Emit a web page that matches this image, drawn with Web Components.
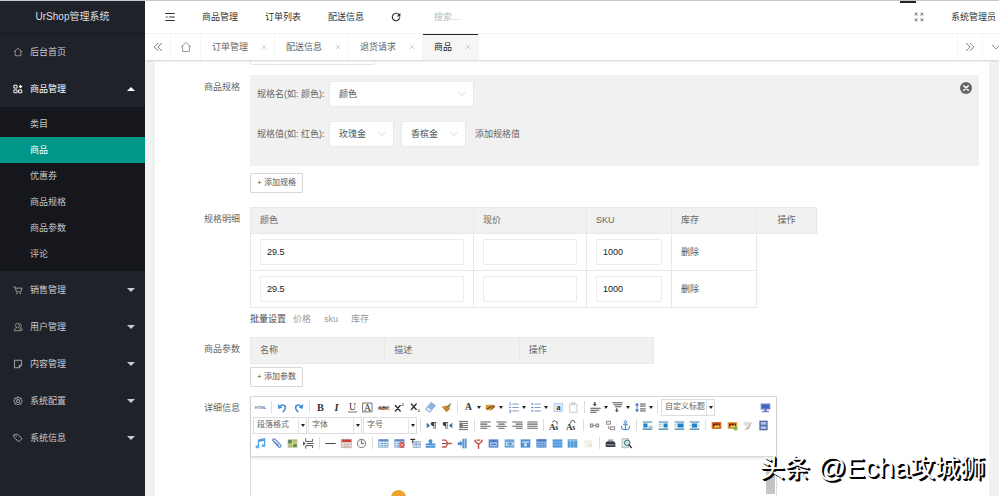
<!DOCTYPE html>
<html lang="zh-CN">
<head>
<meta charset="utf-8">
<title>UrShop管理系统</title>
<style>
html, body { margin: 0; height: 100%; }
body { font: 9px/12px "Liberation Sans", "Noto Sans CJK SC", sans-serif; color: #666; background: #f2f2f2; overflow: hidden; }
</style>
</head>
<body>
<ur-app></ur-app>
<script>
const define = (name, html, setup) => {
  const template = document.createElement('template');
  template.innerHTML = html;
  customElements.define(name, class extends HTMLElement {
    constructor() {
      super();
      this.attachShadow({ mode: 'open' }).append(template.content.cloneNode(true));
    }
    connectedCallback() { if (setup) setup(this, this.shadowRoot); }
  });
};

const line = (d, color = 'currentColor', w = 1.3) => `<path d="${d}" fill="none" stroke="${color}" stroke-width="${w}" stroke-linecap="round" stroke-linejoin="round"/>`;
const fill = (d, color = 'currentColor') => `<path d="${d}" fill="${color}"/>`;
const grid = (head, body) => fill('M1 2H15V14H1Z', body) + fill('M1 2H15V5H1Z', head) + line('M1.5 2.5H14.5V13.5H1.5ZM1.5 8H14.5M1.5 11H14.5M6 5V13.5M10.5 5V13.5', '#4c7fc0', .7);
const text = (x, y, size, s, extra = '') => `<text x="${x}" y="${y}" font-size="${size}" font-family="Liberation Serif, serif" fill="#333" ${extra}>${s}</text>`;
const photo = c => fill('M1 3H15V13H1Z', c) + fill('M3 5H13V11H3Z', '#7b2614') + fill('M3 11L7 7L9 9L11 6L13 11Z', '#f7d35b');
const place = (a, b) => fill('M1 2H15V3.5H1ZM1 12.500H15V14H1Z', '#3a7ea8') + fill(a, '#1c86c8') + line(b, '#6f9db8', 1);

const ICONS = {
  home: line('M2 7.500L8 2L14 7.500M3.500 6.500V14H12.500V6.500', undefined, 1),
  blocks: line('M2 2H6.500V6.500H2ZM2 9.500H6.500V14H2ZM9.500 9.500H14V14H9.500Z', undefined, 1.5) + fill('M12 1L15 4L12 7L9 4Z'),
  cart: line('M1 3H3.500L5.500 11H12.500L14.500 5H4.200', undefined, 1.1) + line('M6 13.500H6.500M11.500 13.500H12', undefined, 1.8),
  users: line('M6 9C3 7 3.500 2 7 2S11 7 8.500 9C11 10 12 11 12 14H2C2 11 3 10 6 9ZM10.500 3C14 3 14 7 12 9C14 10 15 11 15 13H13', undefined, 1),
  note: line('M3 2H13.500V10L10 14H3ZM13 10H10V14', undefined, 1.2),
  gear: line('M8 1.500L10 3.500L13 3L13 6L15 8L13 10L13 13L10 12.500L8 14.500L6 12.500L3 13L3 10L1 8L3 6L3 3L6 3.500ZM8 5.500A2.500 2.500 0 1 0 8 10.500A2.500 2.500 0 1 0 8 5.500', undefined, 1.2),
  tag: line('M1.500 3L7 2L14.500 9L9.500 14L2.500 8ZM5 5.500H5.500', undefined, 1.2),
  indent: line('M1 2.500H15M7 8H15M1 13.500H15M2 8H3.500', undefined, 1.7),
  refresh: line('M13 4.500A6 6 0 1 0 14 9', undefined, 1.8) + fill('M15 1V7H9Z'),
  full: line('M2 5V2H5M11 2H14V5M14 11V14H11M5 14H2V11M3 3L5.500 5.500M13 3L10.500 5.500M13 13L10.500 10.500M3 13L5.500 10.500', undefined, 1),
  prev: line('M8 2L2 8L8 14M14 2L8 8L14 14', undefined, 1.2),
  next: line('M2 2L8 8L2 14M8 2L14 8L8 14', undefined, 1.2),
  down: line('M2 5L8 11L14 5', undefined, 1.2),
  close: line('M3 3L13 13M13 3L3 13', undefined, 1.4),
  remove: '<circle cx="8" cy="8" r="8" fill="#666"/>' + line('M5 5L11 11M11 5L5 11', '#fff', 2),
  html: `<text x="8" y="10" font-size="6" font-weight="bold" text-anchor="middle" font-family="Liberation Sans, sans-serif" fill="#3f86c4">HTML</text>`,
  undo: line('M4 7C7 3 13 4 12 9C12 11 11 12 9 14', '#3c8fd6', 2.2) + fill('M1 3L2 10L8 8Z', '#3c8fd6'),
  redo: line('M12 7C9 3 3 4 4 9C4 11 5 12 7 14', '#3c8fd6', 2.2) + fill('M15 3L14 10L8 8Z', '#3c8fd6'),
  bold: text(3, 13, 15, 'B', 'font-weight="bold"'),
  italic: text(5, 13, 15, 'I', 'font-style="italic" font-weight="bold"'),
  underline: text(3, 11.5, 14, 'U') + line('M2 14.500H14', '#333', 1),
  boxed: line('M1.500 1.500H14.500V14.500H1.500Z', '#333', 1) + text(3, 13, 14, 'A'),
  strike: text(0, 11, 8, 'ABC', 'font-weight="bold"') + line('M0 8.500H16', '#333', 1),
  sup: line('M2 5L9 13M9 5L2 13', '#333', 2) + text(11, 6, 7, '2', 'font-weight="bold"'),
  sub: line('M2 3L9 11M9 3L2 11', '#333', 2) + text(11, 15, 7, '2', 'font-weight="bold"'),
  eraser: fill('M9 1L15 5L7 15L1 11Z', '#8fb5e6') + fill('M4 8L10 12L7 15L1 11Z', '#e2edfa') + line('M9 1L15 5L7 15L1 11Z', '#5f8bcb', 1),
  brush: fill('M15 1L12 9L8 6Z', '#888b4b') + fill('M1 7L8 5L13 10L8 15Z', '#d49241') + line('M4 8L9 13M7 6L12 11', '#8c5a20', 1),
  color: text(3, 12, 14, 'A', 'font-weight="bold"'),
  mark: fill('M1 4H9L14 8L9 12H3L1 9Z', '#dc9b3f') + line('M3 10L12 5M10 10L14 6', '#7b4c18', 1.8),
  ol: line('M7 3H15M7 8H15M7 13H15', '#7a98bf', 1.4) + line('M3 1V5M2 8H4M2 12H4V15H2', '#557dc0', 1.2),
  ul: line('M7 3H15M7 8H15M7 13H15', '#7a98bf', 1.4) + line('M3 3H3.500M3 8H3.500M3 13H3.500', '#3c6fc0', 2.2),
  all: fill('M2 2H14V14H2Z', '#dde9f8') + line('M2 2H14V14H2Z', '#a8c1df', 1) + text(5, 12, 12, 'a', 'font-weight="bold"'),
  paste: line('M3 3H13V15H3ZM6 1H10V4H6Z', '#bdbdbd', 1.2),
  before: fill('M6 0H8V3H10L7 6L4 3H6Z') + line('M1 9H15M1 12H13M1 15H9', '#555', 1.5),
  after: line('M1 1H15M3 4H14M5 7H13', '#555', 1.5) + fill('M6 9H8V12H10L7 15L4 12H6Z', '#555'),
  height: fill('M3 1L6 5H0ZM3 15L0 11H6Z', '#3c6fc0') + line('M3 5V11', '#3c6fc0') + line('M8 3H15M8 6H15M8 10H15M8 13H15', '#444', 1.4),
  screen: fill('M1 2H15V11H1ZM6 11H10V13H13V15H3V13H6Z', '#6d82c9') + fill('M3 4H13V9H3Z', '#4363bd'),
  ltr: fill('M1 4L6 8L1 12Z', '#3c6fc0') + fill('M9 3H15V4H14V13H13V4H12V13H11V9C6 9 6 3 9 3Z', '#444'),
  rtl: fill('M15 4L10 8L15 12Z', '#3c6fc0') + fill('M3 3H9V4H8V13H7V4H6V13H5V9C0 9 0 3 3 3Z', '#444'),
  inden: line('M2 2H14M8 5H14M8 8H14M8 11H14M2 14H14', '#555', 1.3) + fill('M2 4H7V12H2Z', '#777'),
  left: line('M1 3H15M1 6H10M1 9H15M1 12H10', '#666', 1.5),
  center: line('M1 3H15M4 6H12M1 9H15M4 12H12', '#666', 1.5),
  right: line('M1 3H15M6 6H15M1 9H15M6 12H15', '#666', 1.5),
  justify: line('M1 3H15M1 6H15M1 9H15M1 12H15', '#666', 1.5),
  upper: text(0, 15, 13, 'A', 'font-weight="bold"') + text(9, 15, 11, 's', 'font-weight="bold"') + line('M5 3L8 1L12 3V6', '#444', 1.2),
  lower: text(0, 15, 13, 'A', 'font-weight="bold"') + text(9, 15, 11, 's', 'font-weight="bold"') + line('M6 5L8 1H12L13 4', '#444', 1.2),
  link: line('M6 6H2V10H6M10 6H14V10H10M5 8H11', '#888', 1.6),
  unlink: line('M2 2H8V6H2ZM8 10H14V14H8ZM5 9V12H7', '#999', 1.5),
  anchor: line('M8 5V14M2 9C2 13 5 14 8 14S14 13 14 9M5 7H11', '#4b88c8', 1.6) + '<circle cx="8" cy="3" r="2" fill="none" stroke="#4b88c8" stroke-width="1.4"/>',
  pnone: place('M2 5H8V11H2Z', 'M10 9H15M10 11H15'),
  pleft: place('M8 5H14V11H8Z', 'M1 6H6M1 9H6'),
  pright: place('M5 5H14V11H5Z', 'M1 6H3M1 9H3'),
  pcenter: place('M4 5H12V11H4Z', 'M1 8H2M14 8H15'),
  image: photo('#d6692c'),
  images: photo('#e2a13d') + fill('M10 10H15V15H10Z', '#80b742'),
  emotion: fill('M3 2L13 4L10 12L5 14L7 9L2 7Z', '#e1dfd8') + line('M13 4L10 12L5 14', '#9b9688', 1.2),
  video: fill('M2 1H14V15H2Z', '#53699e') + fill('M4 3H12V7H4ZM4 9H12V13H4Z', '#adc0ee'),
  music: line('M5 12V3L14 1V10M5 5L14 3', '#4f9bdb', 1.7) + fill('M1 11H6V15H1ZM10 9H15V13H10Z', '#67aee8'),
  clip: line('M3 4L11 13C14 15 16 11 13 9L6 2C3 0 1 3 4 5L11 11', '#5b82c9', 1.7),
  map: fill('M1 2H15V14H1Z', '#a6bd83') + fill('M2 3H7V8H2ZM9 9H14V13H9Z', '#5b8861') + line('M8 3V13M2 10L14 6', '#ead789', 1.3),
  break: line('M4 1V5H14V2M4 15V11H14V14M6 8H15', '#555', 1.4) + fill('M0 5L4 8L0 11Z', '#555'),
  hr: line('M1 8H15', '#444', 1.5),
  date: fill('M1 2H15V14H1Z', '#e9e2e0') + fill('M1 2H15V6H1Z', '#cd4136') + line('M1 2H15V14H1ZM4 9H12M4 12H12', '#b08b86', .9),
  time: '<circle cx="8" cy="8" r="6" fill="#f4f4f4" stroke="#8b8b8b" stroke-width="1.5"/>' + line('M8 4V8H11', '#555', 1.2),
  table: grid('#5b8acb', '#edf4fc'),
  tdelete: grid('#5b8acb', '#edf4fc') + fill('M8 6H15V14H8Z', '#d6443b') + line('M9.500 8L13.500 12M13.500 8L9.500 12', '#fff', 1),
  ttitle: fill('M5 5H15V14H5Z', '#cdddf0') + line('M5 5H15V14H5ZM5 9H15M9 5V14', '#6a89b5', .8) + line('M1 2H7M4 2V7', '#333', 1.5),
  rowin: fill('M1 8H15V14H1ZM6 5H4L8 1L12 5H10V8H6Z', '#4c91d4') + line('M1 11H15', '#d5e8fa', 1),
  rowdel: line('M2 3H7L10 8H15M2 13H7L10 8', '#c75348', 2) + line('M2 8H8', '#7b4b47', 1.5),
  colin: fill('M8 1H14V15H8ZM1 6H5V3L8 8L5 13V10H1Z', '#4c91d4') + line('M11 1V15', '#d5e8fa', 1),
  coldel: line('M3 3V5L8 9L13 5V3M8 9V15M6 3H10', '#b9463d', 2),
  merge: fill('M1 2H15V14H1Z', '#5882c8') + fill('M3 6H13V12H3Z', '#a8cbf2') + line('M5 9H11M8 4V5', '#284d95', 1.3),
  mright: fill('M1 2H15V14H1Z', '#69a4dc') + fill('M3 6H8V11H3ZM10 6H14V11H10Z', '#e0effd') + line('M5 8.500H12', '#285d9a', 1.3),
  mdown: fill('M1 2H15V14H1Z', '#4b91d0') + fill('M3 5H13V7H3ZM6 8H10V12H6Z', '#d7eafe'),
  split: grid('#5276c1', '#91b8e9'),
  srows: fill('M1 2H15V14H1Z', '#4e9bdc') + line('M1 6H15M1 10H15', '#9fd0f7', .9),
  scols: fill('M1 2H15V14H1Z', '#4e9bdc') + line('M5 4V14M10 4V14M1 4H15', '#b8dcf8', .9),
  chart: fill('M2 3H13V14H2Z', '#f2f1e8') + fill('M9 9H13V13H9Z', '#e8e5b9'),
  print: fill('M4 2H12V6H4Z', '#9ba8b8') + fill('M1 7L3 5H13L15 7V13H1Z', '#353b46') + line('M3 10H13', '#bdc6d1', 1.2),
  preview: fill('M2 1H11V14H2Z', '#dcebe8') + line('M2 1H11V14H2Z', '#89a6a4', 1) + '<circle cx="9" cy="7" r="4" fill="#bfe4df" stroke="#466d70" stroke-width="1.4"/>' + line('M12 10L15 14', '#333', 2)
};

define('ur-icon', `<style>:host{display:inline-flex;flex:none;width:12px;height:12px}svg{width:100%;height:100%;overflow:visible}</style><svg viewBox="0 0 16 16" aria-hidden="true"></svg>`,
  (el, root) => { root.querySelector('svg').innerHTML = ICONS[el.getAttribute('name')] || ''; });

define('ur-menu', `<style>
:host{display:block;color:#c9cacc}
a{display:flex;align-items:center;height:37px;padding:0 10px 0 13px;color:inherit;text-decoration:none}
ur-icon{width:10px;height:10px;margin-right:7px}
i{display:none;margin-left:auto;border:4px solid transparent;border-top-color:currentColor;border-bottom:0}
:host([arrow]) i{display:block}
:host([open]){color:#fff}
:host([open]) i{border-top:0;border-bottom:4px solid currentColor}
:host([open]) nav{background:#16171d;padding:4px 0}
</style><a href="#"><ur-icon></ur-icon><span></span><i></i></a><nav><slot></slot></nav>`,
  (el, root) => {
    root.querySelector('span').textContent = el.getAttribute('label');
    const icon = root.querySelector('ur-icon');
    icon.setAttribute('name', el.getAttribute('icon'));
    icon.shadowRoot.querySelector('svg').innerHTML = ICONS[el.getAttribute('icon')];
  });

define('ur-submenu', `<style>:host{display:block;color:#c4c5c7}a{display:block;line-height:26px;padding-left:30px;color:inherit;text-decoration:none}:host([active]){background:#009688;color:#fff}</style><a href="#"><slot></slot></a>`);

define('ur-sidebar', `<style>
:host{display:block;background:#20222a;overflow:hidden}
h1{margin:0;font-size:10px;font-weight:normal;line-height:33px;text-align:center;color:#dedfe0;box-shadow:0 1px 2px #0003}
</style>
<h1>UrShop管理系统</h1>
<ur-menu icon="home" label="后台首页"></ur-menu>
<ur-menu icon="blocks" label="商品管理" arrow open>
<ur-submenu>类目</ur-submenu><ur-submenu active>商品</ur-submenu><ur-submenu>优惠券</ur-submenu><ur-submenu>商品规格</ur-submenu><ur-submenu>商品参数</ur-submenu><ur-submenu>评论</ur-submenu>
</ur-menu>
<ur-menu icon="cart" label="销售管理" arrow></ur-menu>
<ur-menu icon="users" label="用户管理" arrow></ur-menu>
<ur-menu icon="note" label="内容管理" arrow></ur-menu>
<ur-menu icon="gear" label="系统配置" arrow></ur-menu>
<ur-menu icon="tag" label="系统信息" arrow></ur-menu>`);

define('ur-header', `<style>
:host{display:flex;align-items:center;height:34px;padding:0 3px 0 20px;background:#fff;color:#333;box-sizing:border-box;border-bottom:1px solid #f6f6f6}
a{color:inherit;text-decoration:none}
nav{display:flex;gap:27px;margin:0 27px}
button{border:0;padding:0;background:none;color:inherit;display:flex}
button ur-icon{width:10px;height:10px}
input{border:0;outline:0;background:none;font:inherit;width:80px;padding:0;margin-left:33px}
input::placeholder{color:#bbb}
.right{margin-left:auto;display:flex;align-items:center;gap:27px;position:relative}
.right::before{content:"";position:absolute;top:-10px;right:80px;width:16px;height:2px;background:#222}
</style>
<button aria-label="侧边伸缩"><ur-icon name="indent"></ur-icon></button>
<nav><a href="#">商品管理</a><a href="#">订单列表</a><a href="#">配送信息</a></nav>
<button aria-label="刷新"><ur-icon name="refresh"></ur-icon></button>
<input type="text" placeholder="搜索..." aria-label="搜索">
<div class="right"><button aria-label="全屏"><ur-icon name="full"></ur-icon></button><a href="#">系统管理员</a></div>`);

define('ur-tab', `<style>
:host{display:flex;align-items:center;gap:13px;padding:0 7px 0 11px;border-right:1px solid #f6f6f6;position:relative;color:#666}
a{color:inherit;text-decoration:none}
button{border:0;padding:0;background:none;color:#aaa;display:flex}
ur-icon{width:6px;height:6px}
:host([active]){background:#f6f6f6;color:#222}
:host([active])::after{content:"";position:absolute;left:0;right:0;top:0;height:1px;background:#222}
</style><a href="#"><slot></slot></a><button aria-label="关闭"><ur-icon name="close"></ur-icon></button>`);

define('ur-tabs', `<style>
:host{display:flex;height:26px;background:#fff;box-shadow:0 1px 2px #0002;position:relative;overflow:visible}
.cell{border:0;border-right:1px solid #f6f6f6;background:none;padding:0;width:26px;box-sizing:border-box;display:flex;align-items:center;justify-content:center;color:#555}
.cell.home{width:30px;color:#777}
.cell ur-icon{width:10px;height:10px}
.cell.home ur-icon{width:12px;height:12px}
.end{margin-left:auto;border-left:1px solid #f6f6f6}
.more{width:16px;border:0;justify-content:flex-start;padding-left:8px;overflow:hidden}
</style>
<button class="cell" aria-label="向左"><ur-icon name="prev"></ur-icon></button>
<button class="cell home" aria-label="首页"><ur-icon name="home"></ur-icon></button>
<ur-tab>订单管理</ur-tab><ur-tab>配送信息</ur-tab><ur-tab>退货请求</ur-tab><ur-tab active>商品</ur-tab>
<button class="cell end" aria-label="向右"><ur-icon name="next"></ur-icon></button>
<button class="cell more" aria-label="更多"><ur-icon name="down"></ur-icon></button>`);

define('ur-select', `<style>
:host{display:grid;width:65px;height:26px;background:#fff;border:1px solid #e9e9e9;border-radius:2px;box-sizing:border-box;align-items:center}
select,ur-icon{grid-area:1/1}
select{appearance:none;border:0;outline:0;background:none;font:inherit;color:#555;width:100%;height:100%;padding:0 18px 0 9px}
ur-icon{justify-self:end;margin-right:7px;width:8px;height:8px;color:#bbb;pointer-events:none}
</style><select><option></option></select><ur-icon name="down"></ur-icon>`,
  (el, root) => {
    root.querySelector('select').setAttribute('aria-label', el.getAttribute('label'));
    root.querySelector('option').textContent = el.getAttribute('value');
  });

define('ur-input', `<style>:host{display:block}input{display:block;width:100%;height:26px;box-sizing:border-box;border:1px solid #ececec;border-radius:1px;padding:0 6px;font:inherit;color:#222;background:#fff;outline:0}</style><input type="text">`,
  (el, root) => {
    const input = root.querySelector('input');
    input.value = el.getAttribute('value') || '';
    input.setAttribute('aria-label', el.getAttribute('label'));
  });

define('ur-button', `<style>:host{display:block}button{display:block;height:20px;padding:0 6px;border:1px solid #d8d8d8;border-radius:1px;background:#fff;color:#555;font:inherit;font-size:8px;white-space:nowrap}</style><button><slot></slot></button>`);

define('ur-row', `<style>:host{display:grid;grid-template-columns:85px minmax(0,1fr);column-gap:10px;margin-bottom:10px}.label{text-align:right;line-height:24px}</style><div class="label"></div><div><slot></slot></div>`,
  (el, root) => { root.querySelector('.label').textContent = el.getAttribute('label') || ''; });

define('ur-tool', `<style>
:host{display:flex;flex:16 1 0;min-width:0}
:host([menu]){flex-grow:23}
button{display:flex;align-items:center;width:100%;padding:0 0 0 2px;border:0;background:none;color:#444}
ur-icon{width:11px;height:11px}
i{display:none;border:2px solid transparent;border-top:3px solid #222;border-bottom:0;margin-left:3px;flex:none}
:host([menu]) i{display:block}
</style><button><ur-icon></ur-icon><i></i></button>`,
  (el, root) => {
    const name = el.getAttribute('name');
    root.querySelector('button').setAttribute('aria-label', name);
    root.querySelector('ur-icon').shadowRoot.querySelector('svg').innerHTML = ICONS[name];
    root.querySelector('ur-icon').setAttribute('name', name);
  });

define('ur-combo', `<style>
:host{display:grid;width:54px;height:17px;box-sizing:border-box;border:1px solid #ddd;background:#fff;margin-right:1px;align-items:center}
select,span{grid-area:1/1}
select{appearance:none;border:0;outline:0;background:none;width:100%;height:100%;padding:0 8px 0 3px;font:inherit;font-size:8px;color:#666}
span{justify-self:end;width:7px;height:100%;border-left:1px solid #e4e4e4;display:flex;align-items:center;justify-content:center;pointer-events:none}
i{border:2px solid transparent;border-top:3px solid #222;border-bottom:0}
</style><select><option></option></select><span><i></i></span>`,
  (el, root) => {
    const label = el.getAttribute('label');
    root.querySelector('select').setAttribute('aria-label', label);
    root.querySelector('option').textContent = label;
  });

const TOOLBAR = [
  [[16, 'html'], [32, 'undo redo'], [142, 'bold italic underline boxed strike sup sub eraser brush'], [121, 'color* mark* ol* ul* all paste'], [67, 'before* after* height*'], ['自定义标题'], ['end', 'screen']],
  [['段落格式', '字体', '字号'], [48, 'ltr rtl inden'], [63, 'left center right justify'], [34, 'upper lower'], [47, 'link unlink anchor'], [63, 'pnone pleft pright pcenter'], [62, 'image images emotion video']],
  [[64, 'music clip map break'], [47, 'hr date time'], [221, 'table tdelete ttitle rowin rowdel colin coldel merge mright mdown split srows scols chart'], [32, 'print preview']]
];

define('ur-editor', `<style>
:host{display:block;max-width:527px;box-sizing:border-box;border:1px solid #dcdcdc;background:#fff}
.bar{padding:1px 2px 4px;border-bottom:1px solid #d8d8d8;box-shadow:0 1px 3px #0002}
.line{display:flex;align-items:center;height:18px}
.group{display:flex;flex:none}
.sep{flex:none;width:1px;height:12px;background:#ddd;margin:0 3px 0 2px}
.end{margin-left:auto;width:16px}
.page{height:120px;display:flex;justify-content:flex-end;align-items:flex-start;position:relative}
.thumb{width:9px;height:24px;margin:13px 1px 0 0;background:#c4c4c4}
.dot{position:absolute;left:140px;top:33px;width:15px;height:15px;border-radius:50%;background:#f0a32c}
</style><div class="bar"></div><div class="page"><span class="dot"></span><span class="thumb"></span></div>`,
  (el, root) => {
    root.querySelector('.bar').innerHTML = TOOLBAR.map(row => '<div class="line">' + row.map((group, i) => {
      const sep = i && group[0] !== 'end' ? '<span class="sep"></span>' : '';
      if (group[0] === 'end') return `<div class="group end"><ur-tool name="${group[1]}"></ur-tool></div>`;
      if (typeof group[0] === 'string') return sep + '<div class="group">' + group.map(s => `<ur-combo label="${s}"></ur-combo>`).join('') + '</div>';
      return sep + `<div class="group" style="width:${group[0]}px">` + group[1].split(' ').map(n => `<ur-tool name="${n.replace('*', '')}"${n.endsWith('*') ? ' menu' : ''}></ur-tool>`).join('') + '</div>';
    }).join('') + '</div>').join('');
  });

define('ur-spec', `<style>
:host{display:grid;grid-template-columns:1fr auto;align-items:start;background:#f1f1f1;height:91px;padding:6px 7px;box-sizing:border-box;margin-bottom:7px}
.lines{display:grid;gap:14px}
.line{display:flex;align-items:center}
.name{width:72px;white-space:nowrap}
.wide{width:145px}
.line ur-select + ur-select{margin-left:7px}
a{color:inherit;text-decoration:none;margin-left:9px}
.close{border:0;background:none;padding:0;display:flex;margin-top:1px}
.close ur-icon{width:12px;height:12px}
</style>
<div class="lines">
<div class="line"><span class="name">规格名(如: 颜色):</span><ur-select class="wide" label="规格名" value="颜色"></ur-select></div>
<div class="line"><span class="name">规格值(如: 红色):</span><ur-select label="规格值" value="玫瑰金"></ur-select><ur-select label="规格值" value="香槟金"></ur-select><a href="#">添加规格值</a></div>
</div>
<button class="close" aria-label="删除规格"><ur-icon name="remove"></ur-icon></button>`);

define('ur-product-form', `<style>
:host{display:block;background:#fff;margin:0 10px;padding-right:10px;min-height:100%;box-sizing:border-box}
.stub{width:125px;height:4px;box-sizing:border-box;border:1px solid #e6e6e6;border-top:0;border-radius:0 0 2px 2px}
table{border-collapse:collapse;table-layout:fixed}
th{background:#f1f1f1;font-weight:normal;text-align:left;height:25px}
th,td{border:1px solid #e8e8e8;padding:0 9px}
thead th{padding-bottom:2px;height:23px}
td{height:36px;color:#555}
.mid{text-align:center}
.detail{width:567px}
.params{width:404px;margin-bottom:3px}
.c1{width:223px}.c2{width:113px}.c3{width:85px}.c5{width:60px}
.batch{display:flex;gap:13px;line-height:23px;color:#999}
.batch b{color:#666;font-weight:500;margin-right:-6px}
a{color:inherit;text-decoration:none}
.near{margin-bottom:6px}
.far{margin-bottom:14px}
.tight{margin-bottom:9px}
</style>
<ur-row><div class="stub"></div></ur-row>
<ur-row class="far" label="商品规格"><ur-spec></ur-spec><ur-button>+ 添加规格</ur-button></ur-row>
<ur-row class="near" label="规格明细">
<table class="detail"><colgroup><col class="c1"><col class="c2"><col class="c3"><col class="c3"><col class="c5"></colgroup>
<thead><tr><th>颜色</th><th>现价</th><th>SKU</th><th>库存</th><th class="mid">操作</th></tr></thead>
<tbody>
<tr><td><ur-input label="颜色" value="29.5"></ur-input></td><td><ur-input label="现价"></ur-input></td><td><ur-input label="SKU" value="1000"></ur-input></td><td><a href="#">删除</a></td></tr>
<tr><td><ur-input label="颜色" value="29.5"></ur-input></td><td><ur-input label="现价"></ur-input></td><td><ur-input label="SKU" value="1000"></ur-input></td><td><a href="#">删除</a></td></tr>
</tbody></table>
<div class="batch"><b>批量设置</b><a href="#">价格</a><a href="#">sku</a><a href="#">库存</a></div>
</ur-row>
<ur-row class="tight" label="商品参数">
<table class="params"><thead><tr><th>名称</th><th>描述</th><th>操作</th></tr></thead></table>
<ur-button>+ 添加参数</ur-button>
</ur-row>
<ur-row label="详细信息"><ur-editor></ur-editor></ur-row>`);

define('ur-watermark', `<style>
:host{position:absolute;right:14px;bottom:10px;display:flex;align-items:baseline;gap:8px;font-size:25px;line-height:36px;color:#fff;text-shadow:1px 1px 0 #000,2px 2px 0 #000;white-space:nowrap;pointer-events:none}
.latin{font-size:28px}
</style><span>头条</span><span><span class="latin">@Echa</span>攻城狮</span>`);

define('ur-app', `<style>
:host{display:grid;grid-template-columns:145px minmax(0,1fr);height:100%;position:relative;overflow:hidden}
:host::before{content:"";position:absolute;left:0;right:0;top:0;height:1px;background:#c6c9cc}
.main{display:grid;grid-template-rows:auto auto minmax(0,1fr);min-height:0}
.body{overflow:hidden;padding-top:1px}
</style>
<ur-sidebar></ur-sidebar>
<div class="main"><ur-header></ur-header><ur-tabs></ur-tabs><div class="body"><ur-product-form></ur-product-form></div></div>
<ur-watermark></ur-watermark>`);
</script>
</body>
</html>
